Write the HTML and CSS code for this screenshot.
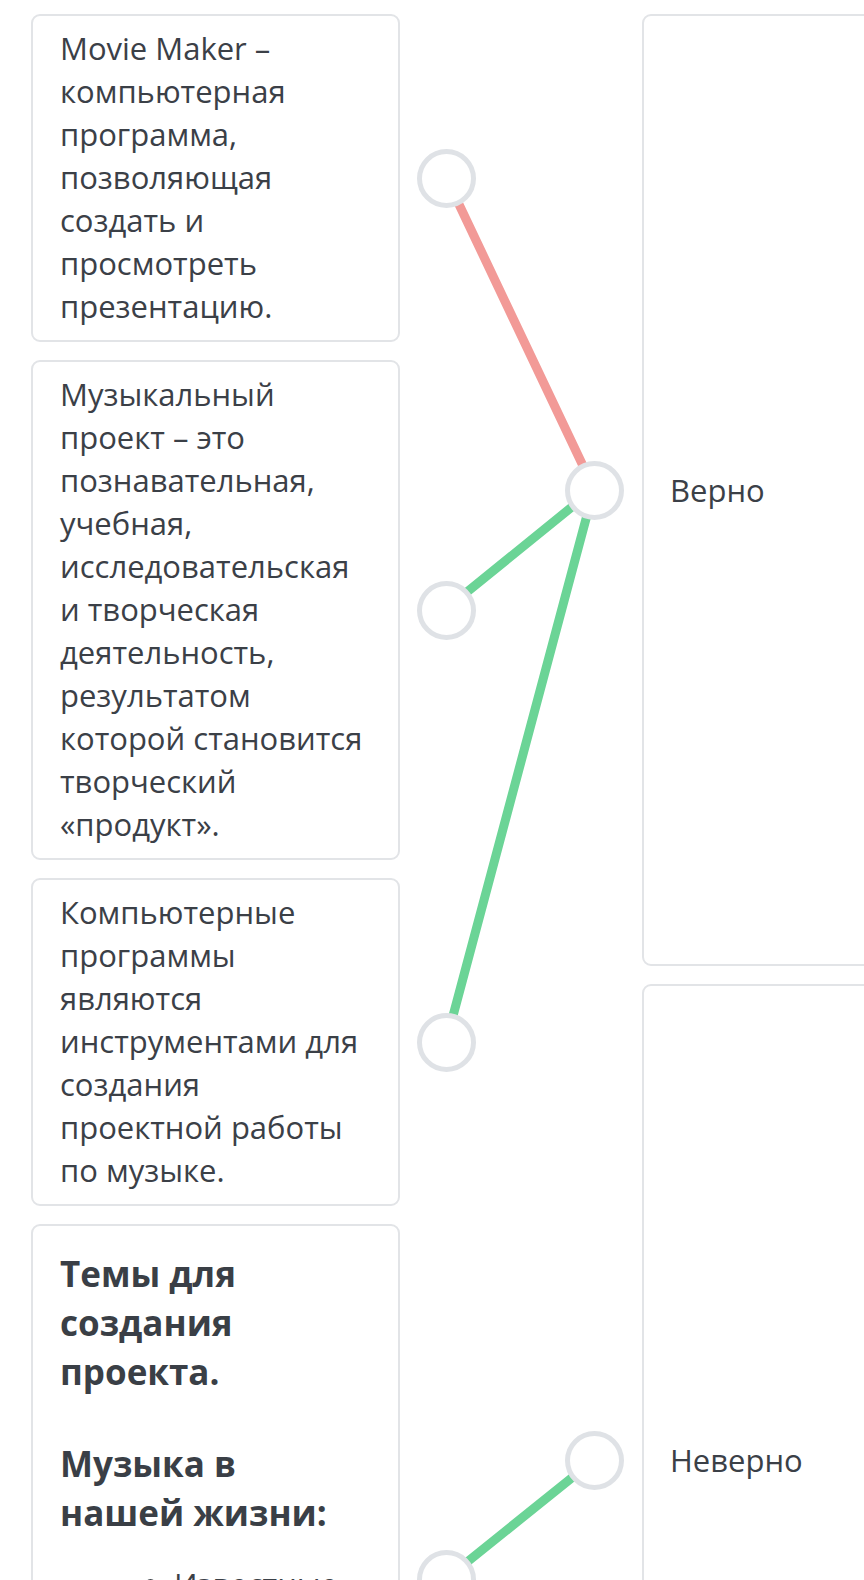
FILE: index.html
```html
<!DOCTYPE html>
<html lang="ru">
<head>
  <meta charset="UTF-8">
  <meta name="viewport" content="width=device-width, initial-scale=1.0">
  <title>Сопоставление</title>
  <link rel="stylesheet" href="styles.css">
</head>
<body>

<div id="match">
  <!-- connection lines, drawn under the dots -->
  <svg class="links" width="864" height="1940" viewBox="0 0 864 1940">
    <line class="wrong" x1="446" y1="177" x2="594" y2="489"></line>
    <line class="right" x1="446" y1="609" x2="594" y2="489"></line>
    <line class="right" x1="446" y1="1042" x2="594" y2="489"></line>
    <line class="right" x1="446" y1="1579" x2="594" y2="1460"></line>
  </svg>

  <div class="column left">
    <div class="row">
      <div class="card">
        Movie Maker – компьютерная программа, позволяющая создать и просмотреть презентацию.
      </div>
      <span class="dot"></span>
    </div>
    <div class="row">
      <div class="card">
        Музыкальный проект – это познавательная, учебная, исследовательская и творческая деятельность, результатом которой становится творческий «продукт».
      </div>
      <span class="dot"></span>
    </div>
    <div class="row">
      <div class="card">
        Компьютерные программы являются инструментами для создания проектной работы по музыке.
      </div>
      <span class="dot"></span>
    </div>
    <div class="row">
      <div class="card card-tall">
        <p class="topic">Темы для создания проекта.</p>
        <p class="topic">Музыка в нашей жизни:</p>
        <ul class="topics">
          <li>Известные композиторы</li>
          <li>Музыка и театр</li>
          <li>Музыка в кино</li>
        </ul>
      </div>
      <span class="dot"></span>
    </div>
  </div>

  <div class="column right-col">
    <div class="row">
      <span class="dot"></span>
      <div class="card answer">Верно</div>
    </div>
    <div class="row">
      <span class="dot"></span>
      <div class="card answer">Неверно</div>
    </div>
  </div>
</div>

</body>
</html>
```

FILE: styles.css
```css
body {
  margin: 0;
  padding: 0;
  background-color: #fff;
  font-family: "Open Sans", "Liberation Sans", sans-serif;
  color: #3b4047;
  overflow: hidden;
}
#match {
  position: relative;
  width: 864px;
  display: flex;
  align-items: flex-start;
  padding-top: 14px;
}
.links {
  position: absolute;
  top: 0;
  left: 0;
  z-index: 0;
}
.links line {
  stroke-width: 9;
  stroke-linecap: round;
}
.links .wrong {
  stroke: #f29a97;
}
.links .right {
  stroke: #6bd496;
}
.column {
  display: flex;
  flex-direction: column;
  gap: 18px;
}
.left {
  margin-left: 31px;
}
.right-col {
  margin-left: 89px;
}
.row {
  display: flex;
  align-items: center;
}
.card {
  box-sizing: border-box;
  width: 369px;
  padding: 11px 28px 12px 27px;
  border: 2px solid #e2e4e7;
  border-radius: 9px;
  background-color: #fff;
  font-size: 31px;
  line-height: 43px;
  position: relative;
  z-index: 1;
}
.card-tall {
  height: 710px;
}
.topic {
  margin: 12px 20px 43px 0;
  font-size: 35px;
  line-height: 49px;
  font-weight: 700;
  color: #3a3f46;
}
.topic + .topic {
  margin: 0 20px 26px 0;
}
.topics {
  margin: 0;
  padding-left: 114px;
}
.dot {
  box-sizing: border-box;
  width: 59px;
  height: 59px;
  border: 5px solid #dfe2e6;
  border-radius: 50%;
  background-color: #fff;
  position: relative;
  z-index: 1;
}
.left .dot {
  margin-left: 17px;
}
.answer {
  width: 320px;
  height: 952px;
  margin-left: 18px;
  padding: 0 0 0 26px;
  display: flex;
  align-items: center;
}
```
